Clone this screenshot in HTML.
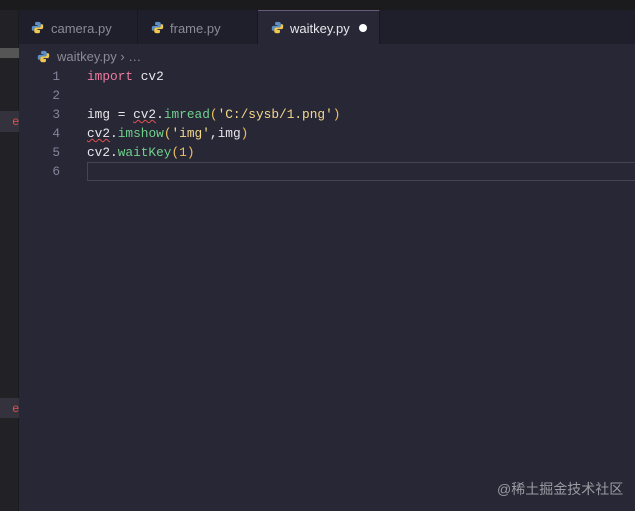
<!DOCTYPE html>
<html><head><meta charset="utf-8"><style>
*{margin:0;padding:0;box-sizing:border-box}
body{width:635px;height:511px;overflow:hidden;background:#282736;font-family:"Liberation Sans",sans-serif;position:relative}
.top{position:absolute;left:0;top:0;width:635px;height:10px;background:#1b1b1d}
.side{position:absolute;left:0;top:10px;width:19px;height:501px;background:#222226;border-right:1px solid #1a1a1f}
.tabbar{position:absolute;left:19px;top:10px;width:616px;height:34px;background:#1f1e2b}
.tab{position:absolute;top:0;height:34px;color:#8b8a96;font-size:13px;line-height:37px;padding-left:32px;border-right:1px solid #18171f}
.tab.act{background:#282736;color:#e6e6ea;border-top:1px solid #6a5a7a;line-height:35px}
.py{position:absolute;width:13px;height:13px}
.bc{position:absolute;left:19px;top:44px;width:616px;height:23px;color:#8b8a96;font-size:13px;line-height:25px;padding-left:38px}
.code{position:absolute;left:0;top:67px;font-family:"Liberation Mono",monospace;font-size:12.8px;line-height:19px}
.ln{position:absolute;left:40px;width:20px;text-align:right;color:#85849a}
.tx{position:absolute;left:87px;color:#e8e6ea;white-space:pre}
.k{color:#ef7aa0}.f{color:#6fd08c}.s{color:#f4d98a}.p{color:#f0c060}.n{color:#f0c060}
.sq{text-decoration:underline wavy #e05050;text-decoration-thickness:1px}
.cur{position:absolute;left:87px;top:162px;width:560px;height:19px;border:1px solid #45444f;border-right:none}
.wm{position:absolute;left:497px;top:479px;color:#9a9aa0;font-size:14px;font-family:"Liberation Sans","Noto Sans CJK SC",sans-serif}
.mark{position:absolute;left:0;width:19px;background:#33323d;color:#e05050;font-size:12px;line-height:20px;text-align:right;overflow:hidden}
</style></head><body>
<div class="top"></div>
<div class="side">
<div class="mark" style="top:38px;height:10px;background:#555"></div>
<div class="mark" style="top:101px;height:21px">e</div>
<div class="mark" style="top:388px;height:20px">e</div>
</div>
<div class="tabbar">
<div class="tab" style="left:0;width:119px">camera.py</div>
<div class="tab" style="left:119px;width:120px">frame.py</div>
<div class="tab act" style="left:239px;width:122px">waitkey.py <span style="display:inline-block;width:8px;height:8px;border-radius:50%;background:#fff;margin-left:6px;vertical-align:1px"></span></div>
</div>
<svg class="py" style="left:31px;top:21px" viewBox="0 0 16 16"><path d="M8 1c-3 0-3 1-3 2v2h3v1H3c-2 0-2 2-2 3.5S1 12 3 12h1v-2c0-1 1-2 2-2h4c1 0 2-1 2-2V3c0-1-1-2-4-2z" fill="#5a8fc8"/><path d="M8 15c3 0 3-1 3-2v-2H8v-1h5c2 0 2-2 2-3.5S15 4 13 4h-1v2c0 1-1 2-2 2H6c-1 0-2 1-2 2v3c0 1 1 2 4 2z" fill="#f0c850"/></svg>
<svg class="py" style="left:151px;top:21px" viewBox="0 0 16 16"><path d="M8 1c-3 0-3 1-3 2v2h3v1H3c-2 0-2 2-2 3.5S1 12 3 12h1v-2c0-1 1-2 2-2h4c1 0 2-1 2-2V3c0-1-1-2-4-2z" fill="#5a8fc8"/><path d="M8 15c3 0 3-1 3-2v-2H8v-1h5c2 0 2-2 2-3.5S15 4 13 4h-1v2c0 1-1 2-2 2H6c-1 0-2 1-2 2v3c0 1 1 2 4 2z" fill="#f0c850"/></svg>
<svg class="py" style="left:271px;top:21px" viewBox="0 0 16 16"><path d="M8 1c-3 0-3 1-3 2v2h3v1H3c-2 0-2 2-2 3.5S1 12 3 12h1v-2c0-1 1-2 2-2h4c1 0 2-1 2-2V3c0-1-1-2-4-2z" fill="#5a8fc8"/><path d="M8 15c3 0 3-1 3-2v-2H8v-1h5c2 0 2-2 2-3.5S15 4 13 4h-1v2c0 1-1 2-2 2H6c-1 0-2 1-2 2v3c0 1 1 2 4 2z" fill="#f0c850"/></svg>
<svg class="py" style="left:37px;top:50px" viewBox="0 0 16 16"><path d="M8 1c-3 0-3 1-3 2v2h3v1H3c-2 0-2 2-2 3.5S1 12 3 12h1v-2c0-1 1-2 2-2h4c1 0 2-1 2-2V3c0-1-1-2-4-2z" fill="#5a8fc8"/><path d="M8 15c3 0 3-1 3-2v-2H8v-1h5c2 0 2-2 2-3.5S15 4 13 4h-1v2c0 1-1 2-2 2H6c-1 0-2 1-2 2v3c0 1 1 2 4 2z" fill="#f0c850"/></svg>
<div class="bc">waitkey.py › …</div>
<div class="cur"></div>
<div class="code">
<div class="ln" style="top:0">1</div><div class="tx" style="top:0"><span class="k">import</span> cv2</div>
<div class="ln" style="top:19px">2</div>
<div class="ln" style="top:38px">3</div><div class="tx" style="top:38px">img = <span class="sq">cv2</span>.<span class="f">imread</span><span class="p">(</span><span class="s">'C:/sysb/1.png'</span><span class="p">)</span></div>
<div class="ln" style="top:57px">4</div><div class="tx" style="top:57px"><span class="sq">cv2</span>.<span class="f">imshow</span><span class="p">(</span><span class="s">'img'</span>,img<span class="p">)</span></div>
<div class="ln" style="top:76px">5</div><div class="tx" style="top:76px">cv2.<span class="f">waitKey</span><span class="p">(</span><span class="n">1</span><span class="p">)</span></div>
<div class="ln" style="top:95px">6</div>
</div>
<div class="wm">@稀土掘金技术社区</div>
</body></html>
